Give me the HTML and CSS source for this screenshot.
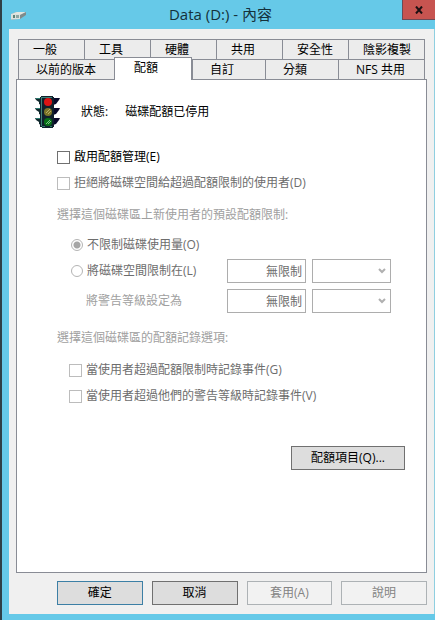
FILE: index.html
```html
<!DOCTYPE html>
<html lang="zh-Hant">
<head>
    <meta charset="utf-8">
    <meta name="viewport" content="width=device-width, initial-scale=1.0">
    <title>Data (D:) - 內容</title>
    <link rel="stylesheet" href="styles.css">
</head>
<body>
    <div class="window">
        <header class="titlebar">
            <svg class="drive" viewBox="0 0 16 10" aria-hidden="true">
                <path d="M0 3L5 1L15 1L15 3L9 8L0 9Z" fill="#b9c4c4"/>
                <path d="M1 3L6 1H15L9 4Z" fill="#e3e6e0"/>
                <path d="M9 4L15 1V4L9 8Z" fill="#7e8b8d"/>
                <path d="M0 3H9V8H0Z" fill="#dce2df"/>
                <path d="M2 4H4V7H2Z" fill="#5f8376"/>
                <path d="M5 4H8V7H5Z" fill="#8da7a3"/>
            </svg>
            <h1 class="title">Data (D:) - 內容</h1>
            <button class="close" type="button" aria-label="關閉">
                <svg viewBox="0 0 8 8" aria-hidden="true"><path d="M1 0.5L7 7.5M7 0.5L1 7.5" stroke="#1c1012" stroke-width="2"/></svg>
            </button>
        </header>

        <main class="client">
            <div class="tabs" role="tablist">
                <div class="tab-row">
                    <button class="tab" type="button" role="tab">一般</button>
                    <button class="tab" type="button" role="tab">工具</button>
                    <button class="tab" type="button" role="tab">硬體</button>
                    <button class="tab" type="button" role="tab">共用</button>
                    <button class="tab" type="button" role="tab">安全性</button>
                    <button class="tab tab-last" type="button" role="tab">陰影複製</button>
                </div>
                <div class="tab-row front">
                    <button class="tab tab-wide" type="button" role="tab">以前的版本</button>
                    <button class="tab selected" type="button" role="tab" aria-selected="true">配額</button>
                    <button class="tab" type="button" role="tab">自訂</button>
                    <button class="tab" type="button" role="tab">分類</button>
                    <button class="tab tab-nfs" type="button" role="tab">NFS 共用</button>
                </div>
            </div>

            <section class="panel" role="tabpanel">
                <div class="status">
                    <svg class="light" viewBox="0 0 32 32" aria-hidden="true">
                        <path d="M2 2H8V9L6 8V6L3 4ZM2 12H8V19L6 18V16L3 14ZM2 22H8V29L6 28V26L3 24Z" fill="#10282c"/>
                        <path d="M3 2H7V3H3ZM3 12H7V13H3ZM3 22H7V23H3Z" fill="#2f7d72"/>
                        <path d="M27 2H20V9L23 8L26 4ZM27 12H20V19L23 18L26 14ZM27 22H20V29L23 28L26 24Z" fill="#08082a"/>
                        <path d="M8 0H20V1H21V31H20V32H9V31H7V1H8Z" fill="#10202c"/>
                        <path d="M8 1H19V2H9V30H8Z" fill="#3d8078"/>
                        <circle cx="15" cy="6" r="4" fill="#dc1414"/>
                        <circle cx="15" cy="16" r="4" fill="#7c7428"/>
                        <circle cx="15" cy="26" r="4" fill="#087018"/>
                        <path d="M13 17L17 13M15 18L18 15" stroke="#b5ae68"/>
                        <path d="M13 28L17 24M15 28L18 25" stroke="#7cc486"/>
                        <path d="M9 30H12V31H9ZM17 30H19V31H17Z" fill="#2c7a68"/>
                    </svg>
                    <span>狀態:</span>
                    <span class="status-value">磁碟配額已停用</span>
                </div>

                <form class="quota">
                    <label class="row"><input class="box" type="checkbox">啟用配額管理(E)</label>
                    <label class="row off"><input class="box" type="checkbox" disabled>拒絕將磁碟空間給超過配額限制的使用者(D)</label>

                    <p class="row heading">選擇這個磁碟區上新使用者的預設配額限制:</p>
                    <div class="limits">
                        <label class="row off"><input class="dot" type="radio" name="limit" checked disabled>不限制磁碟使用量(O)</label>
                        <div class="limit-row">
                            <label class="row off"><input class="dot" type="radio" name="limit" disabled>將磁碟空間限制在(L)</label>
                            <input class="amount" type="text" value="無限制" aria-label="磁碟空間限制" disabled>
                            <select class="unit" aria-label="磁碟空間單位" disabled><option></option></select>
                        </div>
                        <div class="limit-row warning">
                            <label class="row warning-label" for="warning">將警告等級設定為</label>
                            <input class="amount" type="text" id="warning" value="無限制" disabled>
                            <select class="unit" aria-label="警告等級單位" disabled><option></option></select>
                        </div>
                    </div>

                    <p class="row heading log-heading">選擇這個磁碟區的配額記錄選項:</p>
                    <div class="logs">
                        <label class="row off"><input class="box" type="checkbox" disabled>當使用者超過配額限制時記錄事件(G)</label>
                        <label class="row off"><input class="box" type="checkbox" disabled>當使用者超過他們的警告等級時記錄事件(V)</label>
                    </div>
                </form>

                <button class="button entries" type="button">配額項目(Q)...</button>
            </section>

            <footer class="footer">
                <button class="button default" type="button">確定</button>
                <button class="button" type="button">取消</button>
                <button class="button" type="button" disabled>套用(A)</button>
                <button class="button" type="button" disabled>說明</button>
            </footer>
        </main>
    </div>
</body>
</html>
```

FILE: styles.css
```css
* {
    box-sizing: border-box;
}

body {
    margin: 0;
    background: #2f3f46;
    color: #000;
    font-family: "Open Sans", "Noto Sans CJK TC", sans-serif;
    font-size: 12px;
    line-height: 16px;
}

button,
input,
select {
    margin: 0;
    font: inherit;
    color: inherit;
}

.window {
    display: flex;
    flex-direction: column;
    min-height: 100vh;
    margin-left: 2px;
    padding: 0 0 6px 7px;
    background: #66c9e8;
}

/* title bar */
.titlebar {
    display: flex;
    height: 29px;
}

.drive {
    width: 16px;
    height: 10px;
    margin: 11px 0 0 2px;
}

.title {
    flex: 1;
    margin: 0;
    padding-left: 12px;
    color: #14313b;
    font-size: 15px;
    font-weight: normal;
    line-height: 28px;
    text-align: center;
}

.close {
    display: flex;
    justify-content: center;
    align-items: center;
    width: 33px;
    height: 20px;
    padding: 0;
    border: 1px solid #6d4a55;
    border-width: 0 0 1px 1px;
    background: #c75450;
}

.close svg {
    width: 8px;
    height: 8px;
}

.client {
    display: flex;
    flex: 1;
    flex-direction: column;
    padding: 10px 7px 9px;
    border-right: 1px solid #8fcfe0;
    background: #f0f0f0;
}

/* tabs */
.tabs {
    padding: 0 2px;
}

.tab-row {
    display: flex;
    height: 20px;
}

.tab {
    flex: 1 1 66px;
    padding: 0 0 0 14px;
    border: 1px solid #898c95;
    border-width: 1px 0 0 1px;
    background: #ececec;
    text-align: left;
    white-space: nowrap;
}

.tab:last-child {
    border-right-width: 1px;
}

.tab-last {
    flex-basis: 77px;
}

.front .tab {
    flex-basis: 73px;
    padding-left: 17px;
}

.front .tab-wide {
    flex-basis: 96px;
}

.front .tab-nfs {
    flex-basis: 87px;
}

.front .selected {
    z-index: 1;
    flex-basis: 78px;
    margin: -2px 0 -1px;
    padding: 0 0 2px 19px;
    border-right-width: 1px;
    background: #fff;
}

.panel {
    display: flex;
    flex: 1;
    flex-direction: column;
    padding: 16px 21px 16px 16px;
    border: 1px solid #898c95;
    background: #fff;
}

.status {
    display: flex;
    align-items: center;
}

.light {
    width: 32px;
    height: 32px;
    margin-right: 16px;
}

.status-value {
    margin-left: 17px;
}

/* quota settings */
.quota {
    margin-top: 16px;
    padding-left: 24px;
}

.row {
    display: flex;
    align-items: center;
    height: 26px;
    margin: 0;
    white-space: nowrap;
}

.off {
    color: #6d6d6d;
}

.heading,
.warning-label {
    color: #a0a0a0;
}

.heading {
    margin: 6px 0 4px;
}

.log-heading {
    margin: 11px 0 6px;
}

.box {
    appearance: none;
    width: 13px;
    height: 13px;
    margin-right: 4px;
    border: 1px solid #707070;
    background: #fff;
}

.box:disabled {
    border-color: #bcbcbc;
}

.box:checked {
    background: #707070;
}

.dot {
    appearance: none;
    width: 12px;
    height: 12px;
    margin-right: 4px;
    border: 1px solid #b4b4b4;
    border-radius: 50%;
    background: #fff;
}

.dot:checked {
    background: radial-gradient(circle, #a6a6a6 0 3px, #fff 4px);
}

.limits {
    padding-left: 14px;
}

.limit-row {
    display: grid;
    grid-template-columns: 150px 79px 79px;
    align-items: center;
    gap: 6px;
}

.warning {
    margin-top: 4px;
}

.warning-label {
    padding-left: 15px;
}

.amount,
.unit {
    width: 100%;
    height: 24px;
    border: 1px solid #adadad;
    border-radius: 0;
    background: #fff;
    color: #6d6d6d;
    opacity: 1;
}

.amount {
    padding: 0 3px;
    text-align: right;
}

.unit {
    appearance: none;
    background: #fff url("data:image/svg+xml,%3Csvg xmlns='http://www.w3.org/2000/svg' width='8' height='6'%3E%3Cpath d='M1 1L4 4L7 1' fill='none' stroke='%23b0b0b0' stroke-width='2'/%3E%3C/svg%3E") no-repeat right 4px center;
}

.logs {
    padding-left: 12px;
}

/* buttons */
.button {
    height: 24px;
    padding: 0;
    border: 1px solid #707070;
    background: #dddddd;
}

.button:disabled {
    border-color: #adb2b5;
    background: #f2f2f2;
    color: #838383;
}

.default {
    border-color: #3c7fa5;
}

.entries {
    align-self: flex-end;
    width: 114px;
    margin-top: 37px;
}

.footer {
    display: grid;
    grid-template-columns: repeat(4, 1fr);
    gap: 9px;
    margin-top: 8px;
    padding-left: 41px;
}
```
